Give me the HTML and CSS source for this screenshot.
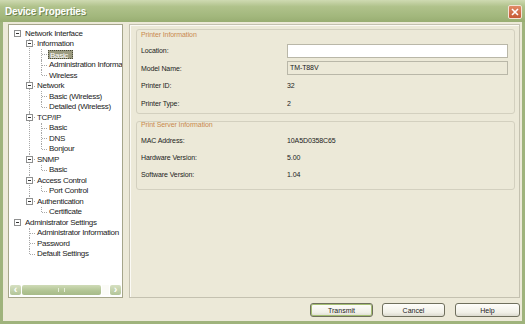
FILE: index.html
```html
<!DOCTYPE html>
<html lang="en">
<head>
  <meta charset="UTF-8" />
  <title>Device Properties</title>
  <link rel="stylesheet" href="styles.css">
</head>
<body>
  <div class="window">
    <div class="titlebar">
      <span class="title">Device Properties</span>
      <span class="close">
        <svg width="8" height="8" viewBox="0 0 8 8"><path d="M1 1L7 7M7 1L1 7" stroke="#fff" stroke-width="1.6"/></svg>
      </span>
    </div>

    <div class="main">
      <!-- tree on the left -->
      <div class="tree-panel">
        <div class="tree">
          <ul class="root">
            <li><div class="row"><span class="exp"></span><span class="label">Network Interface</span></div>
              <ul>
                <li><div class="row"><span class="exp"></span><span class="label">Information</span></div>
                  <ul>
                    <li><div class="row"><span class="gap"></span><span class="label selected">Basic</span></div></li>
                    <li><div class="row"><span class="gap"></span><span class="label">Administration Informa</span></div></li>
                    <li><div class="row"><span class="gap"></span><span class="label">Wireless</span></div></li>
                  </ul>
                </li>
                <li><div class="row"><span class="exp"></span><span class="label">Network</span></div>
                  <ul>
                    <li><div class="row"><span class="gap"></span><span class="label">Basic (Wireless)</span></div></li>
                    <li><div class="row"><span class="gap"></span><span class="label">Detailed (Wireless)</span></div></li>
                  </ul>
                </li>
                <li><div class="row"><span class="exp"></span><span class="label">TCP/IP</span></div>
                  <ul>
                    <li><div class="row"><span class="gap"></span><span class="label">Basic</span></div></li>
                    <li><div class="row"><span class="gap"></span><span class="label">DNS</span></div></li>
                    <li><div class="row"><span class="gap"></span><span class="label">Bonjour</span></div></li>
                  </ul>
                </li>
                <li><div class="row"><span class="exp"></span><span class="label">SNMP</span></div>
                  <ul>
                    <li><div class="row"><span class="gap"></span><span class="label">Basic</span></div></li>
                  </ul>
                </li>
                <li><div class="row"><span class="exp"></span><span class="label">Access Control</span></div>
                  <ul>
                    <li><div class="row"><span class="gap"></span><span class="label">Port Control</span></div></li>
                  </ul>
                </li>
                <li><div class="row"><span class="exp"></span><span class="label">Authentication</span></div>
                  <ul>
                    <li><div class="row"><span class="gap"></span><span class="label">Certificate</span></div></li>
                  </ul>
                </li>
              </ul>
            </li>
            <li><div class="row"><span class="exp"></span><span class="label">Administrator Settings</span></div>
              <ul>
                <li><div class="row"><span class="gap"></span><span class="label">Administrator Information</span></div></li>
                <li><div class="row"><span class="gap"></span><span class="label">Password</span></div></li>
                <li><div class="row"><span class="gap"></span><span class="label">Default Settings</span></div></li>
              </ul>
            </li>
          </ul>
        </div>
        <div class="hscroll">
          <span class="sbtn">&#8249;</span>
          <span class="thumb"><span class="grip"></span></span>
          <span class="track"></span>
          <span class="sbtn">&#8250;</span>
        </div>
      </div>

      <!-- properties on the right -->
      <div class="props-panel">
        <div class="group">
          <div class="caption">Printer Information</div>
          <div class="prop"><span class="key">Location:</span><span class="field"></span></div>
          <div class="prop"><span class="key">Model Name:</span><span class="field readonly">TM-T88V</span></div>
          <div class="prop"><span class="key">Printer ID:</span><span class="val">32</span></div>
          <div class="prop"><span class="key">Printer Type:</span><span class="val">2</span></div>
        </div>
        <div class="group server">
          <div class="caption">Print Server Information</div>
          <div class="prop"><span class="key">MAC Address:</span><span class="val">10A5D0358C65</span></div>
          <div class="prop"><span class="key">Hardware Version:</span><span class="val">5.00</span></div>
          <div class="prop"><span class="key">Software Version:</span><span class="val">1.04</span></div>
        </div>
      </div>
    </div>

    <div class="footer">
      <button class="btn default">Transmit</button>
      <button class="btn">Cancel</button>
      <button class="btn help">Help</button>
    </div>
  </div>
</body>
</html>
```

FILE: styles.css
```css
body {
  margin: 0;
  font-family: "Liberation Sans", Arial, sans-serif;
  background-color: #fff;
}

.window {
  width: 525px;
  height: 324px;
  box-sizing: border-box;
  background-color: #ece9d8;
  border: 3px solid #9fb37c;
  border-top: none;
  display: flex;
  flex-direction: column;
}

.titlebar {
  height: 22px;
  margin: 0 -3px;
  padding: 0 3px 0 5px;
  display: flex;
  align-items: center;
  justify-content: space-between;
  background: linear-gradient(#cfdab2, #b0c28b 30%, #a2b77c 75%, #98ad72);
}

.title {
  color: #fff;
  font-weight: bold;
  font-size: 10px;
  letter-spacing: -0.2px;
  text-shadow: 1px 1px 0 #6f8550;
}

.close {
  width: 14px;
  height: 14px;
  box-sizing: border-box;
  border: 1px solid #f3e3d6;
  border-radius: 2px;
  background: linear-gradient(#e08a66, #c75a35);
  display: flex;
  align-items: center;
  justify-content: center;
  margin-top: 1px;
}

.main {
  height: 274px;
  margin-top: 2px;
  padding: 0 2px 0 5px;
  display: flex;
  gap: 6px;
}

/* tree */

.tree-panel {
  width: 115px;
  box-sizing: border-box;
  background-color: #fff;
  border: 1px solid #a5a58a;
  display: flex;
  flex-direction: column;
}

.tree {
  flex: 1;
  overflow: hidden;
  white-space: nowrap;
  padding-top: 3px;
  font-size: 8px;
  letter-spacing: -0.3px;
  color: #1b1b1b;
}

.tree ul {
  list-style: none;
  margin: 0;
  padding: 0 0 0 12px;
}

.tree ul.root {
  padding-left: 0;
}

.tree li {
  position: relative;
}

.tree ul ul > li::before {
  content: "";
  position: absolute;
  left: 8px;
  top: 0;
  bottom: 0;
  border-left: 1px dotted #a8a8a8;
}

.tree ul ul > li:last-child::before {
  bottom: auto;
  height: 5px;
}

.tree ul ul > li::after {
  content: "";
  position: absolute;
  left: 9px;
  top: 5px;
  width: 5px;
  border-top: 1px dotted #a8a8a8;
}

.row {
  height: 10.5px;
  padding-left: 5px;
  display: flex;
  align-items: center;
  position: relative;
  z-index: 1;
}

.exp,
.gap {
  flex: none;
  width: 7px;
  height: 7px;
  margin-right: 4px;
  box-sizing: border-box;
}

.exp {
  border: 1px solid #8e8f8f;
  background: #fff;
  position: relative;
}

.exp::after {
  content: "";
  position: absolute;
  left: 1px;
  top: 2px;
  width: 3px;
  height: 1px;
  background: #333;
}

.label.selected {
  margin-left: -1px;
  padding: 0 4px 0 1px;
  height: 9px;
  line-height: 9px;
  box-sizing: border-box;
  background-color: #9b9b80;
  color: #fff;
  border: 1px dotted #4a4a3a;
}

.hscroll {
  height: 10px;
  margin: 0 1px 2px;
  display: flex;
  gap: 1px;
}

.sbtn {
  width: 11px;
  flex: none;
  border-radius: 2px;
  background: linear-gradient(#d6e0c1, #b3c598);
  color: #fff;
  font-size: 11px;
  font-weight: bold;
  line-height: 9px;
  text-align: center;
}

.thumb {
  width: 79px;
  flex: none;
  border-radius: 2px;
  background: linear-gradient(#cfdbb7, #b1c493 60%, #a7bb8a);
  display: flex;
  align-items: center;
  justify-content: center;
}

.grip {
  width: 5px;
  height: 4px;
  border-left: 1px solid #e6edd9;
  border-right: 1px solid #e6edd9;
}

.track {
  flex: 1;
  background-color: #fbfbf7;
}

/* properties */

.props-panel {
  flex: 1;
  box-sizing: border-box;
  border: 1px solid #c4c1b0;
  box-shadow: inset 1px 1px 0 #fbfaf5;
  padding: 4px 4px 0 6px;
  font-size: 7px;
  letter-spacing: -0.1px;
  color: #222;
}

.group {
  border: 1px solid #d3d0bf;
  border-radius: 3px;
  padding: 0 4px 1px 4px;
  margin-bottom: 7px;
}

.caption {
  height: 8px;
  line-height: 8px;
  margin-top: 1px;
  margin-bottom: 3px;
  color: #c98a4f;
}

.server .caption {
  margin-top: -1px;
  margin-bottom: 3px;
}

.prop {
  height: 17.5px;
  display: flex;
  align-items: center;
}

.server .prop {
  height: 17px;
}

.server {
  padding-bottom: 6px;
}

.key {
  width: 146px;
  flex: none;
}

.field {
  width: 221px;
  height: 14px;
  box-sizing: border-box;
  border: 1px solid #b9b7a8;
  background-color: #fff;
  padding-left: 2px;
  line-height: 12px;
}

.field.readonly {
  background-color: #ece9d8;
}

/* buttons */

.footer {
  height: 23px;
  padding-right: 2px;
  display: flex;
  justify-content: flex-end;
  align-items: flex-start;
  gap: 9px;
}

.btn {
  width: 63px;
  height: 14px;
  margin-top: 5px;
  padding: 0;
  font-family: "Liberation Sans", Arial, sans-serif;
  font-size: 7px;
  color: #222;
  border: 1px solid #6f6f5d;
  border-radius: 3px;
  background: linear-gradient(#fefefb, #f1f0e7 70%, #dcdbcf);
}

.btn.default {
  box-shadow: inset 0 0 0 1px #a5bf73;
}

.btn.help {
  width: 65px;
  margin-left: 1px;
}
```
